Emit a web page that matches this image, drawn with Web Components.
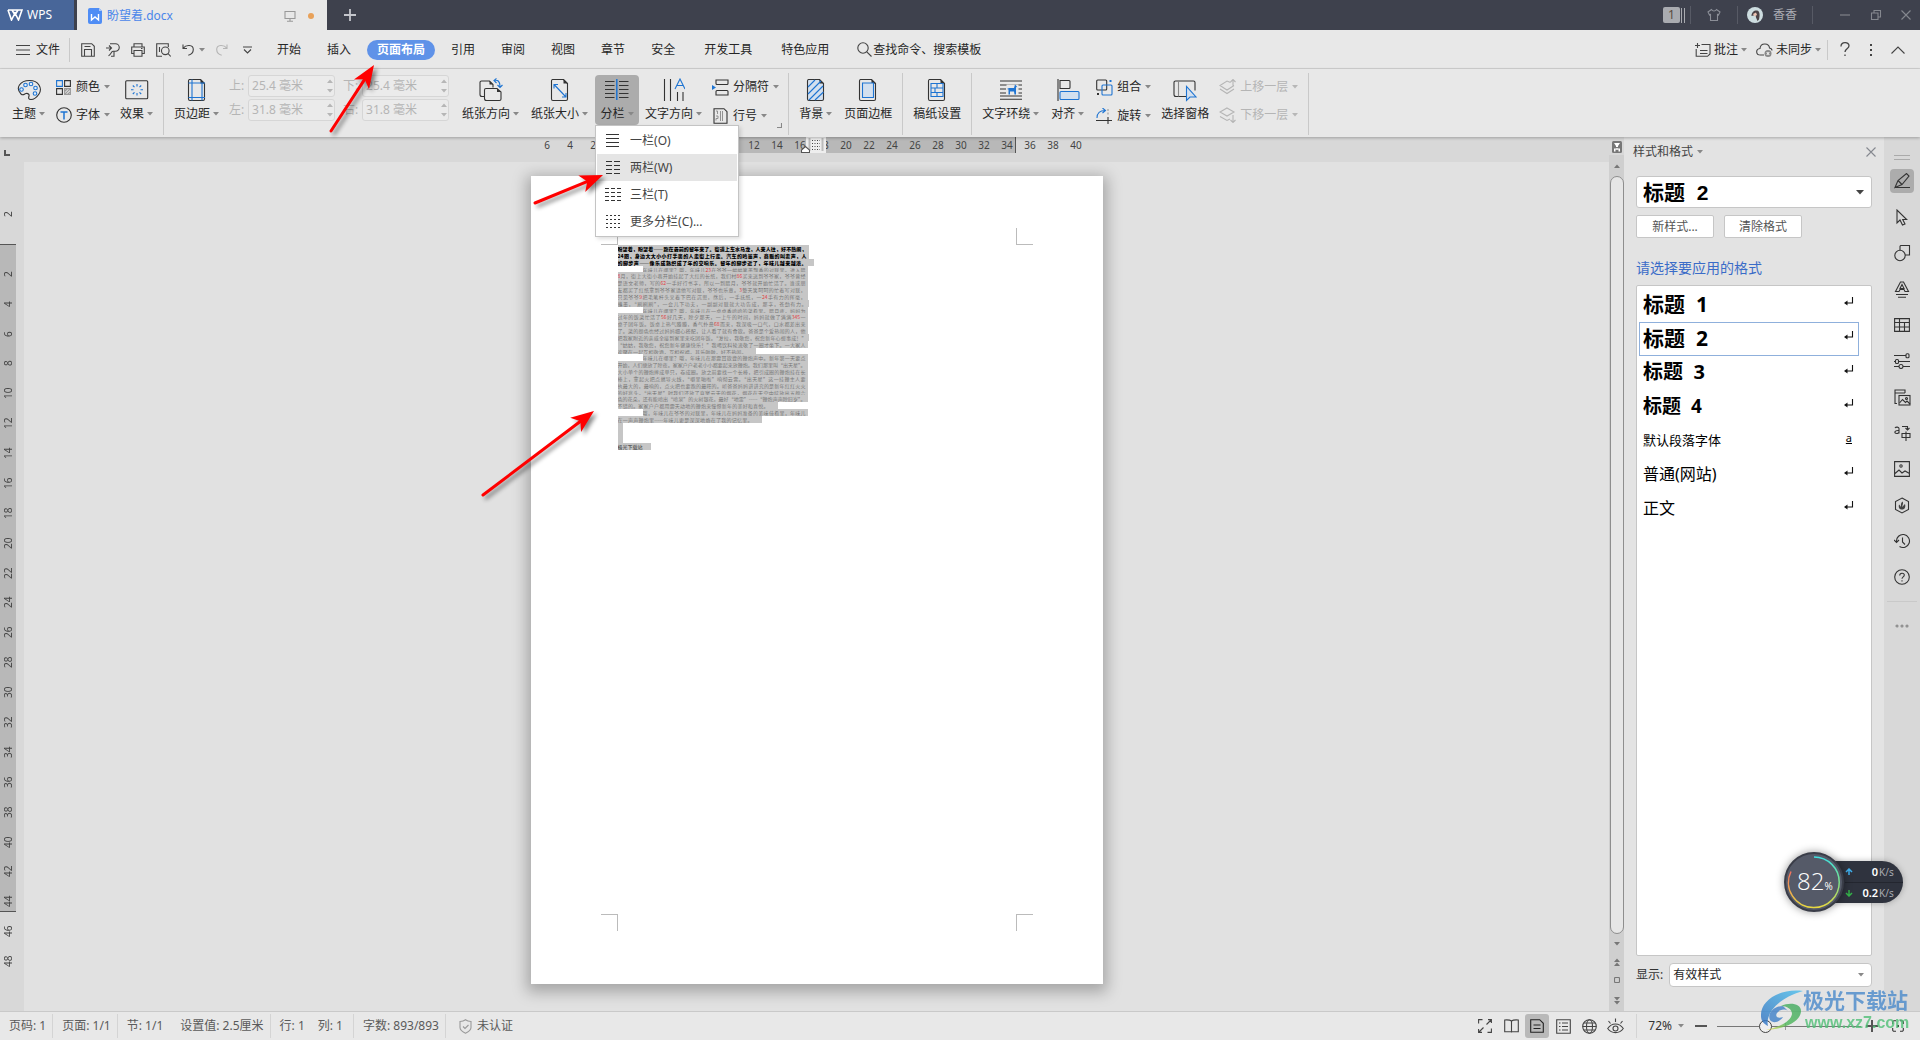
<!DOCTYPE html>
<html lang="zh-CN">
<head>
<meta charset="utf-8">
<title>盼望着.docx - WPS</title>
<style>
html,body{margin:0;height:100%;overflow:hidden}
body{font:12px/16px "Noto Sans","Noto Sans CJK SC",sans-serif;color:#262626;background:#e1e1e1}
</style>
</head>
<body>
<wps-app></wps-app>
<script>
const page='<path d="M3.5 1.500h11l4 4v15.500a1.500 1.500 0 0 1-1.500 1.500h-13a1.500 1.500 0 0 1-1.500-1.500v-18a1.500 1.500 0 0 1 1-1.500z" stroke="#333"/><path d="M14.500 1v4.500h4.500z" fill="#333" stroke="none"/>';
/* name: [width, height, markup] */
const ICONS={
caret:[6,4,'<path d="M0 0h6l-3 3.500z" fill="#888" stroke="none"/>'],
caretDark:[8,5,'<path d="M0 0h8l-4 4.500z" fill="#444" stroke="none"/>'],
wps:[16,12,'<path d="M1 1h14l-3.500 10-3.500-7-3.500 7-3.500-10M5 1l3 5 3-5" stroke="#fff" stroke-width="1.600"/>'],
doc:[14,16,'<path d="M2 0h9l3 3v11a2 2 0 0 1-2 2h-10a2 2 0 0 1-2-2v-12a2 2 0 0 1 2-2z" fill="#4f8df5" stroke="none"/><path d="M11 0v3h3z" fill="#a8c8fb" stroke="none"/><path d="M3.500 6v6l3.500-3 3.500 3v-6" stroke="#fff" stroke-width="1.400"/>'],
monitor:[12,12,'<path d="M1 1.500h10v7h-10zM6 8.500v2.500M3 11.200h6" stroke="#999"/>'],
plus:[12,12,'<path d="M6 0v12M0 6h12" stroke="#c4c6cc" stroke-width="1.800"/>'],
shirt:[14,14,'<path d="M4.500 1.500l-3.500 2.500 1.500 3 1-.5v6h7v-6l1 .5 1.500-3-3.500-2.500c-1 2-4 2-5 0z" stroke="#8b8e97"/>'],
avatar:[16,16,'<circle cx="8" cy="8" r="8" fill="#cddde0" stroke="none"/><path d="M4.500 9c0-4 3-6 5.500-5.500 3 .5 3 5 2 9l-1.500 1.500-1.500-3.500c0-2-1-3-2.500-2z" fill="#4b4246" stroke="none"/><path d="M6 7l3-1.500 1 2.500-2.500 1.500z" fill="#edc4b3" stroke="none"/>'],
min:[10,2,'<path d="M0 1h10" stroke="#85888f"/>'],
restore:[12,12,'<path d="M1.500 4h6.500v6.500h-6.500zM4 4v-2.500h6.500v6.500h-2.500" stroke="#85888f"/>'],
close:[10,10,'<path d="M.5 .5l9 9M9.500 .5l-9 9" stroke="#85888f"/>'],
menu:[14,10,'<path d="M0 .5h14M0 5h14M0 9.500h14" stroke="#444" stroke-width="1"/>'],
save:[14,14,'<path d="M.7 .7h10l2.600 2.600v10h-12.600zM3.500 13v-6.500h7v6.500M3.500 3.500h6" stroke="#444"/>'],
pdf:[14,14,'<path d="M4 .800h5.500a3.500 3.500 0 0 1 0 7.500h-2.500c-2 0-2 3.500-4.500 4.500M0 5h5M3 2.500l2.500 2.500-2.500 2.500M5 13.300h3v-5" stroke="#444"/>'],
print:[14,14,'<path d="M3 4v-3.300h8v3.300M3 10.500h-2.300v-6.500h12.600v6.500h-2.300M3 7.500h8v5.800h-8zM10 5.500h1.500" stroke="#444"/>'],
preview:[15,14,'<path d="M12.300 4v-3.300h-11.600v12.600h5.300M3.500 4v5" stroke="#444"/><circle cx="9.300" cy="7.800" r="3.800" stroke="#444"/><path d="M12 10.500l2.700 3" stroke="#444"/>'],
undo:[13,13,'<path d="M1 1.500v4h4M1.300 5.200c3-4 10-3.500 10 1.300 0 3-2.500 5-5 5.800" stroke="#444"/>'],
redo:[13,13,'<path d="M12 1.500v4h-4M11.700 5.200c-3-4-10-3.500-10 1.300 0 3 2.500 5 5 5.800" stroke="#b5b5b5"/>'],
more:[9,8,'<path d="M0 1h9M1 3.500l3.500 3.500 3.500-3.500" stroke="#444"/>'],
search:[15,15,'<circle cx="6" cy="6" r="5.200" stroke="#444"/><path d="M9.800 9.800l4.700 4.700" stroke="#444"/>'],
note:[16,14,'<path d="M6.500 1.500h8.500v9.500l-2.500 2.300h-11.300v-7.300M0 2.500h5M2.500 0v5M5 7.500h7.500M5 10.500h7.500" stroke="#444"/>'],
cloud:[17,14,'<path d="M8 12h-3.500c-5 0-5-6-.5-6.500.5-6 9-6 9.500-.5 1.500.3 2.500 1.300 2.500 2.500" stroke="#444"/><circle cx="12" cy="10.500" r="3.500" fill="#888" stroke="none"/><path d="M10.700 9.200l2.600 2.600M13.300 9.200l-2.600 2.600" stroke="#eee"/>'],
help:[10,15,'<path d="M1 4.500c0-5 8-5 8-.8 0 3-4 3-4 6.300M5 12.500v1.500" stroke="#444" stroke-width="1.300"/>'],
dots:[4,12,'<path d="M1 0h2v2h-2zM1 5h2v2h-2zM1 10h2v2h-2z" fill="#444" stroke="none"/>'],
up:[14,8,'<path d="M.5 7.500l6.500-6.500 6.500 6.500" stroke="#444"/>'],
theme:[24,22,'<path d="M4 15c-6-6-1-13.500 8.500-13.500s13 8 9.500 13.500c-3 4.500-5 5.500-8 5.500s-2.500-2-2-3.500-1-3-3-2.500-2.500 2.500-5 .5z" stroke="#333"/><g stroke="#1e74d2" fill="#e4effa"><circle cx="4.500" cy="10.500" r="1.800"/><circle cx="8.500" cy="6" r="1.800"/><circle cx="14" cy="5" r="1.800"/><circle cx="18.500" cy="9" r="1.800"/><circle cx="18" cy="14.500" r="1.800"/></g>'],
color:[15,15,'<path d="M.6 .6h5.800v5.800h-5.800z" stroke="#1e74d2"/><path d="M8.600 .6h5.800v5.800h-5.800zM.6 8.600h5.800v5.800h-5.800z" stroke="#333"/><path d="M8.600 8.600h5.800v5.800h-5.800zM8.600 14.400l5.800-5.800M8.600 11.500l3-3M11.500 14.400l3-3" stroke="#999"/>'],
font:[16,16,'<circle cx="8" cy="8" r="7.300" stroke="#333"/><path d="M4.500 5h7M8 5v7.500" stroke="#1e74d2" stroke-width="1.500"/>'],
effect:[24,20,'<rect x=".7" y=".7" width="22" height="18" rx="1" stroke="#333"/><path d="M12 4v2.500M12 13v2.500M6 9.800h2.500M15.500 9.800h2.500M7.800 5.500l1.700 1.700M14.500 12.300l1.700 1.700M16.200 5.500l-1.700 1.700M9.500 12.300l-1.700 1.700" stroke="#1e74d2"/>'],
margin:[22,24,page+'<path d="M6 1.500v21M16 5v17.500M2.500 5h16.500M2.500 19.500h16.500" stroke="#1e74d2"/>'],
orient:[24,24,'<path d="M6 18.500h-3a2 2 0 0 1-2-2v-12a1.500 1.500 0 0 1 1.500-1.500h8l3.500 3.500v3" stroke="#333"/><path d="M10.500 3v3.500h3.500z" fill="#333" stroke="none"/><path d="M7 10.500h11l4 3.500v7a1.500 1.500 0 0 1-1.500 1.500h-13a2 2 0 0 1-2-2v-8.500a1.500 1.500 0 0 1 1.500-1.500z" stroke="#333" fill="#e8e8e8"/><path d="M18 10.500v3.500h4z" fill="#333" stroke="none"/><path d="M15 2.500c4-1 6 1 6 6M17.500 .5l-2.500 2 2.500 2.500M18.500 7l2.500 2.500 2.500-2.500" stroke="#1e74d2"/>'],
size:[22,24,page+'<path d="M5.500 7l11 11.500M5 10.500v-4h4M17 15v4h-4" stroke="#1e74d2"/>'],
columns:[24,24,'<path d="M0 3.500h9.500M0 7.500h9.500M0 11.500h9.500M0 15.500h9.500M0 19.500h9.500M14 3.500h9.500M14 7.500h9.500M14 11.500h9.500M14 15.500h9.500M14 19.500h9.500" stroke="#333"/><path d="M11.800 1v21" stroke="#1e74d2" stroke-width="1.500"/>'],
textdir:[22,24,'<path d="M1.500 1v22M7.500 1v22M14.500 14v9M20 14v9" stroke="#333"/><path d="M12 11l5-10 5 10M13.800 7.500h6.500" stroke="#1e74d2"/>'],
breaks:[17,17,'<path d="M4 1v3.500a1 1 0 0 0 1 1h10a1 1 0 0 0 1-1v-3.500zM4 16v-3.500a1 1 0 0 1 1-1h10a1 1 0 0 1 1 1v3.500z" stroke="#333"/><path d="M0 6l4 2.500-4 2.500z" fill="#1e74d2" stroke="none"/>'],
lineno:[15,16,'<path d="M1 .7h10l3 3v11.600h-13z" stroke="#333"/><path d="M3 3h1.500v3M3 8h2v2.500h-2v2M7.500 3v10M9.500 3v10" stroke="#888" stroke-width=".9"/>'],
bg:[22,24,'<path d="M3 2h12l4 4v16h-16z" fill="#d3e0ef" stroke="none"/>'+page+'<path d="M3 9l7-7M3 16l13-13M4 22l14-14M10 22l8.500-8" stroke="#1e74d2"/>'],
border:[22,24,page+'<path d="M5.500 5h11v14.500h-11z" stroke="#1e74d2" fill="#d3e0ef"/>'],
grid:[22,24,page+'<path d="M5 5.500h12v13h-12zM5 10h12M5 14.500h12M11 5.500v4.500M11 14.500v4M9 10v4.500" stroke="#1e74d2"/>'],
wrap:[22,20,'<path d="M0 1h22M0 5h22M0 9h6M18 9h4M0 13h6M18 13h4M0 16h22M0 19.300h22" stroke="#333"/><path d="M6.500 4.500h12v10h-12z" fill="#e8e8e8" stroke="none"/><path d="M7 9l1.500.5v5h1.500v-3h4l.5 3h1.500v-7l1-1-2-2-1 3.500h-5z" fill="#1e74d2" stroke="none"/>'],
align:[24,24,'<path d="M2 1v22M4 2.500h9a1 1 0 0 1 1 1v6a1 1 0 0 1-1 1h-9z" stroke="#333"/><rect x="4" y="13.500" width="19" height="8" rx="1" stroke="#1e74d2" fill="#d3e0ef"/>'],
group:[17,17,'<rect x=".7" y="1" width="10" height="10" rx="1" stroke="#333"/><rect x="6" y="6" width="10" height="10" rx="1" stroke="#1e74d2"/><path d="M13.500 1h2v2h-2z" fill="#1e74d2" stroke="none"/><path d="M1 14h2v2h-2z" fill="#333" stroke="none"/>'],
rotate:[17,16,'<path d="M1 10c0-5 3-7.500 8-7.500M6.500 0l3 2.500-3 2.500" stroke="#1e74d2"/><path d="M0 12.500h16M12 9v7" stroke="#333"/><path d="M12 1v7" stroke="#999" stroke-dasharray="2 1.500"/>'],
select:[24,24,'<path d="M13 18.500h-10a2 2 0 0 1-2-2v-12a1.500 1.500 0 0 1 1.500-1.500h18a1.500 1.500 0 0 1 1.500 1.500v8" stroke="#333"/><path d="M5.500 3v15.500" stroke="#888"/><path d="M13.500 8.500v14l3.500-3.500h6z" stroke="#1e74d2" fill="#d3e0ef"/>'],
layerUp:[17,16,'<path d="M11.500 3.500l-3.500-1.500-7 4.500 7 4.500 7-4.500M1 10l7 4.500 7-4.500M14 6.500v-5.500M11.500 3l2.500-2.500 2.500 2.500" stroke="#b5b5b5"/>'],
layerDown:[17,16,'<path d="M8 1l7 4-7 4-7-4zM1 9.500l7 4 3-1.500M14 8v7M11.500 13l2.500 2.500 2.500-2.500" stroke="#b5b5b5"/>'],
launcher:[5,5,'<path d="M4.500 0v4.500h-4.500" stroke="#888"/>'],
col1:[16,14,'<path d="M1 .5h13M1 4.500h13M1 8.500h13M1 12.500h13" stroke="#333"/>'],
col2:[16,14,'<path d="M1 .5h6M9 .5h6M1 4.500h6M9 4.500h6M1 8.500h6M9 8.500h6M1 12.500h6M9 12.500h6" stroke="#333"/>'],
col3:[16,14,'<path d="M0 .5h16M0 4.500h16M0 8.500h16M0 12.500h16" stroke="#333" stroke-dasharray="4 2"/>'],
col4:[16,14,'<path d="M1 .5h14M1 4.500h14M1 8.500h14M1 12.500h14" stroke="#333" stroke-dasharray="2 2"/>'],
colmark:[20,14,'<path d="M3.500 1v13M16.500 1v13" stroke="#bbb" stroke-width="2"/><path d="M6 3.500h8M6 6.500h8M6 9.500h8M6 12.500h8" stroke="#444" stroke-dasharray="1 1.500"/>'],
indent:[9,7,'<path d="M.5 6.500v-2.500l4-3.500 4 3.500v2.500z" fill="#fff" stroke="#555"/>'],
tabstop:[6,6,'<path d="M1 0v5h5" stroke="#555" stroke-width="2"/>'],
diskette:[10,12,'<rect width="10" height="12" rx="1.500" fill="#777" stroke="none"/><path d="M2 2h6l-2 3v1h-2v-1zM2 8h1.500v2.500h-1.500zM4.500 7h1v2h-1zM6.500 8h1.500v2.500h-1.500zM2 7.500h6v1h-6z" fill="#fff" stroke="none"/>'],
triUp:[6,4,'<path d="M0 4h6l-3-3.500z" fill="#777" stroke="none"/>'],
triDown:[6,4,'<path d="M0 0h6l-3 3.500z" fill="#777" stroke="none"/>'],
dblUp:[6,8,'<path d="M0 4h6l-3-3.500zM0 8h6l-3-3.500z" fill="#777" stroke="none"/>'],
dblDown:[6,8,'<path d="M0 0h6l-3 3.500zM0 4h6l-3 3.500z" fill="#777" stroke="none"/>'],
ring:[6,6,'<rect x=".5" y=".5" width="5" height="5" rx="1" stroke="#777"/>'],
enter:[10,9,'<path d="M8.500 0v6h-6.500" stroke="#111"/><path d="M0 6l3.500-2.500v5z" fill="#111" stroke="none"/>'],
grip:[16,5,'<path d="M0 .5h16M0 4.500h16" stroke="#aaa"/>'],
pen:[18,16,'<path d="M2 14.500l3-7 8.500-7 2.500 2.500-7 8.500zM5 7.500l4 4M2 14.500h15" stroke="#333"/>'],
cursor:[12,17,'<path d="M1 1v13l3-3 2.500 5 2.500-1-2.300-4.500h4z" stroke="#333"/>'],
shapes:[17,17,'<path d="M6 5v-3.500a1 1 0 0 1 1-1h8.500v9.500h-4.500" stroke="#333"/><circle cx="6" cy="10.500" r="5.200" stroke="#333"/>'],
art:[16,17,'<path d="M1.500 10.500l5-9.500h3l5 9.500h-3.500l-1-2h-4l-1 2zM6 7.500l2-4 2 4zM2 13.500h12M4 16.200h8" stroke="#333"/>'],
table:[16,14,'<path d="M.6 .6h14.800v12.800h-14.800zM.6 4.500h14.800M.6 9h14.800M5.500 .6v12.800M10.500 4.500v9" stroke="#333"/>'],
sliders:[16,16,'<path d="M0 2.500h12M5 8.500h11M0 8.500h1M0 13.500h5M9 13.500h7" stroke="#333"/><rect x="12" y=".7" width="3" height="4" rx="1" stroke="#333"/><rect x="1.500" y="6.500" width="3" height="4" rx="1" stroke="#333"/><circle cx="7" cy="13.500" r="2" stroke="#333"/>'],
gallery:[17,17,'<path d="M1 4v-3h10v3M1 4h10M1 4v10.500h2" stroke="#333"/><rect x="5" y="6.500" width="11" height="9.500" stroke="#333"/><path d="M5.500 14l3-3.500 3 3 1.500-1.500 3 3" stroke="#333"/><circle cx="12.500" cy="9.500" r="1" stroke="#333"/>'],
translate:[17,16,'<path d="M1 3c1-1.500 4-1 4 .5v5M5 5.500c-5-.5-5 3-2.500 3 1.500 0 2.500-.5 2.500-1.500M8 1.500h5.500v3M11.500 3l2 2 2-2M8 8.500h8v4h-8zM12 6.500v9.500" stroke="#333"/>'],
image:[16,16,'<path d="M.6 .6h14.800v14.800h-14.800zM1 12.500l4-3.500 3 3 3-2 4.500 2.500" stroke="#333"/><circle cx="7" cy="5" r="1.200" stroke="#333"/>'],
hex:[16,17,'<path d="M8 1l6.500 3.500v8l-6.500 3.500-6.500-3.500v-8z" stroke="#333"/><path d="M8.500 4.500c1.500 2-.5 3.500 0 5.500.8-1 1.200-2 2.500-3 1 3.500-.5 5.500-2.800 5.500-2.200 0-4.200-1.200-3.200-5 1 .7 1.500 1.500 2 2.700.2-2-.8-3.700 1.500-5.700z" fill="#444" stroke="none"/>'],
clock:[17,16,'<path d="M2.500 8.500a6.500 6.500 0 1 1 3 5M0 7l2.500 2.500 2.500-2.500M8.500 4.500v4.500l2.500 2.500" stroke="#333"/>'],
helpc:[16,16,'<circle cx="8" cy="8" r="7.300" stroke="#333"/><path d="M5.700 6.500c0-3 4.600-3 4.600-.5 0 2-2.300 1.700-2.300 3.800M8 11.300v1.200" stroke="#333"/>'],
ell:[14,4,'<g stroke="#888"><circle cx="2" cy="2" r="1"/><circle cx="7" cy="2" r="1"/><circle cx="12" cy="2" r="1"/></g>'],
shield:[13,15,'<path d="M1 2.500c2 0 4-.5 5.500-1.700 1.500 1.200 3.500 1.700 5.500 1.700v6c0 3-3 4.500-5.500 5.700-2.500-1.200-5.500-2.700-5.500-5.700zM4 7.500l2 2 3.500-3.500" stroke="#999"/>'],
full:[14,14,'<path d="M4 13.400h-3.400v-3.400M13.400 4v-3.400h-3.400M.6 4.500v-3.900h3.900M13.400 9.500v3.900h-3.900M8.500 5.500l4.500-4.500M5.500 8.500l-4.500 4.500" stroke="#444"/>'],
book:[15,14,'<path d="M7.500 2v11.500M7.500 2c-1.500-1.200-4-1.200-6.800-1v11.800h6.800M7.500 2c1.500-1.200 4-1.200 6.800-1v11.800h-6.800" stroke="#444"/>'],
pageview:[14,14,'<path d="M.7 .7h9l3.600 3.600v9h-12.600zM3.500 6h7M3.500 9.500h7" stroke="#222"/>'],
outline:[15,15,'<path d="M.7 .7h13.600v13.600h-13.600zM6 4h6M6 7.500h6M6 11h6M3 4h1.500M3 7.500h1.500M3 11h1.500" stroke="#444"/>'],
globe:[15,15,'<circle cx="7.500" cy="7.500" r="6.800" stroke="#444"/><ellipse cx="7.500" cy="7.500" rx="3" ry="6.800" stroke="#444"/><path d="M.7 7.500h13.600M1.500 4h12M1.500 11h12" stroke="#444"/>'],
eye:[17,16,'<path d="M.7 10.500c4-6 11.500-6 15.600 0-4 5.500-11.500 5.500-15.600 0zM8.500 4v-3.500M3.500 5.500l-2-2.500M13.500 5.500l2-2.500" stroke="#444"/><circle cx="8.500" cy="10.500" r="2.500" stroke="#444"/>'],
minus:[12,2,'<path d="M0 1h12" stroke="#555" stroke-width="2"/>'],
plusd:[12,12,'<path d="M6 0v12M0 6h12" stroke="#555" stroke-width="2"/>'],
fit:[12,12,'<path d="M4 .7h-2a1.300 1.300 0 0 0-1.300 1.300v2M.7 8v2a1.300 1.300 0 0 0 1.300 1.300h2M8 .7h2a1.300 1.300 0 0 1 1.300 1.300v2M11.300 8v2a1.300 1.300 0 0 1-1.300 1.300h-2" stroke="#333"/><path d="M5 5h2v2h-2z" fill="#333" stroke="none"/>'],
};
const COMMON=`:host{display:block;box-sizing:border-box}*{box-sizing:border-box}
button,input,select{font:inherit;color:inherit;background:none;border:0;padding:0;margin:0}
button{display:inline-flex;align-items:center;white-space:nowrap}a{color:inherit;text-decoration:none}ul{list-style:none;margin:0;padding:0}
.row{display:flex;align-items:center}.sep{width:1px;background:#c9c9c9;flex:none}`;
class El extends HTMLElement{
 connectedCallback(){if(this.shadowRoot)return;const r=this.attachShadow({mode:'open'});r.innerHTML='<style>'+COMMON+(this.constructor.css||'')+'</style>'+this.html();}
 a(n){return this.getAttribute(n)||''}
}
const def=(name,css,html)=>customElements.define(name,class extends El{static css=css;html(){return html(this)}});
const i=n=>`<wps-icon name="${n}"></wps-icon>`;

def('wps-icon',':host{display:inline-flex;flex:none}svg{display:block}',e=>{const[w,h,m]=ICONS[e.a('name')];return`<svg width="${w}" height="${h}" viewBox="0 0 ${w} ${h}" fill="none" stroke-width="1.1" aria-hidden="true">${m}</svg>`});

def('title-bar',`:host{display:flex;height:30px;background:#3e414d;color:#a9abb2;align-items:stretch}
.wps{width:74px;background:#486699;color:#fff;padding-left:7px;gap:4px;margin-right:3px}
.tab{width:250px;background:#e8e8e8;color:#4a86ea;padding:2px 13px 0 11px}.tab span{margin-left:5px;flex:1}.dot{width:6px;height:6px;border-radius:3px;background:#e8a159;margin-left:12px}
.add{padding:0 17px}.fill{flex:1}.right{gap:0}.badge{width:17px;height:16px;background:#a9abb0;color:#5b4b40;border-radius:2px;text-align:center;line-height:16px}
.bars{width:4px;height:15px;border-left:1px solid #a9abb0;border-right:1px solid #a9abb0;margin:0 5px 0 1px}
.sep{height:18px;background:#575a65}.right button{height:30px}`,
()=>`<button class="wps">${i('wps')}WPS</button><div class="tab row">${i('doc')}<span>盼望着.docx</span>${i('monitor')}<i class="dot"></i></div><button class="add" aria-label="新建">${i('plus')}</button><div class="fill"></div>
<div class="right row"><div class="badge">1</div><div class="bars"></div><i class="sep"></i><button style="padding:0 16px" aria-label="皮肤">${i('shirt')}</button><i class="sep"></i><button style="padding:0 15px 0 9px;gap:10px">${i('avatar')}香香</button><i class="sep"></i><button style="padding:0 10px 0 27px" aria-label="最小化">${i('min')}</button><button style="padding:0 9px 0 10px" aria-label="还原">${i('restore')}</button><button style="padding:0 9px 0 10px" aria-label="关闭">${i('close')}</button></div>`);

def('menu-bar',`:host{display:flex;height:39px;background:#e8e8e8;border-bottom:1px solid #d2d2d2;align-items:center;padding:1px 0 0 16px}
.file{gap:6px;margin-right:9px}.sep{height:24px}.quick{gap:11px;padding-left:11px;width:194px}.quick button:nth-child(6){margin-left:-1px}
nav a{padding:0 13px;line-height:20px}nav a.on{background:#5f92e8;color:#fff;font-weight:700;border-radius:10px;margin:0 3px;padding:0 10px}nav a.wide{padding:0 13px 0 16px}nav a.last{padding-left:16px;padding-right:28px}
.search{gap:1px}.fill{flex:1}`,
()=>`<button class="file">${i('menu')}文件</button><i class="sep"></i><div class="quick row"><button aria-label="保存">${i('save')}</button><button aria-label="输出PDF">${i('pdf')}</button><button aria-label="打印">${i('print')}</button><button aria-label="预览">${i('preview')}</button><button aria-label="撤销" style="gap:4px">${i('undo')}${i('caret')}</button><button aria-label="恢复">${i('redo')}</button><button aria-label="更多" style="margin-left:4px">${i('more')}</button></div>
<nav class="row"><a href="#">开始</a><a href="#">插入</a><a href="#" class="on">页面布局</a><a href="#">引用</a><a href="#">审阅</a><a href="#">视图</a><a href="#">章节</a><a href="#">安全</a><a href="#" class="wide">开发工具</a><a href="#" class="last">特色应用</a></nav><button class="search">${i('search')}查找命令、搜索模板</button><div class="fill"></div>
<button style="gap:3px;margin-right:9px">${i('note')}批注${i('caret')}</button><button style="gap:3px;margin-right:6px">${i('cloud')}未同步${i('caret')}</button><i class="sep" style="height:20px"></i><button style="padding:0 19px 0 12px" aria-label="帮助">${i('help')}</button><button aria-label="选项">${i('dots')}</button><button style="padding:0 15px 0 18px" aria-label="折叠">${i('up')}</button>`);

def('big-tool',`:host{display:block;margin-top:6px}button{flex-direction:column;height:50px;padding:3px 0;border-radius:4px;gap:4px}.ic{height:24px;display:flex;align-items:center}.lb{display:flex;align-items:center;gap:3px;line-height:16px}
:host([active]) button{background:#acacac;padding:3px 5px;width:44px}`,
e=>`<button><span class="ic">${i(e.a('icon'))}</span><span class="lb"><slot></slot>${e.hasAttribute('plain')?'':i('caret')}</span></button>`);
def('small-tool',`button{height:22px;gap:4px}.ic{width:17px;display:flex;justify-content:center}:host([off]) button{color:#b5b5b5}:host([off]) wps-icon[name=caret]{opacity:.5}`,
e=>`<button${e.hasAttribute('off')?' disabled':''}><span class="ic">${i(e.a('icon'))}</span><slot></slot>${i('caret')}</button>`);
def('num-field',`:host{display:flex;align-items:center;color:#b5b5b5}label{width:19px;white-space:nowrap}.box{display:flex;align-items:center;width:87px;height:22px;border:1px solid #d6d6d6;border-radius:3px;background:#ebebeb;padding:0 1px 0 3px}input{width:70px;flex:1;min-width:0;color:#b5b5b5}.sp{display:flex;flex-direction:column;gap:6px;opacity:.45}`,
e=>`<label for="f">${e.a('label')}:</label><span class="box"><input id="f" value="${e.a('value')}" disabled><span class="sp">${i('triUp')}${i('triDown')}</span></span>`);
def('column-menu',`:host{position:absolute;left:0;top:50px;width:144px;border:1px solid #c4c4c4;background:#fff;padding:1px;box-shadow:2px 2px 4px #0002;z-index:5}
button{display:flex;width:100%;height:27px;padding-left:8px;gap:9px;color:#444}button.on{background:#e5e5e5}`,
()=>[['col1','一栏(O)'],['col2','两栏(W)'],['col3','三栏(T)'],['col4','更多分栏(C)...']].map(([n,t],k)=>`<button${k==1?' class="on"':''} role="menuitem">${i(n)}${t}</button>`).join(''));

def('ribbon-bar',`:host{display:flex;height:68px;background:#e8e8e8;padding-left:12px;gap:10px;align-items:flex-start;position:relative;z-index:3;box-shadow:0 1px 3px #0004}
.col{display:flex;flex-direction:column;gap:5px;padding-top:7px}.fields{display:grid;grid-template-columns:106px 106px;gap:2px 8px;padding-top:6px;margin-right:3px}
.sep{height:62px;margin-top:4px}.m{margin-right:2px}.w{position:relative}.w column-menu{margin-top:6px}.launch{align-self:flex-end;margin:0 -4px 5px -12px}`,
()=>`<big-tool icon="theme">主题</big-tool><div class="col"><small-tool icon="color">颜色</small-tool><small-tool icon="font">字体</small-tool></div><big-tool icon="effect">效果</big-tool><i class="sep"></i>
<big-tool icon="margin">页边距</big-tool><div class="fields"><num-field label="上" value="25.4 毫米"></num-field><num-field label="下" value="25.4 毫米"></num-field><num-field label="左" value="31.8 毫米"></num-field><num-field label="右" value="31.8 毫米"></num-field></div>
<big-tool class="m" icon="orient">纸张方向</big-tool><big-tool icon="size" style="margin-right:-3px">纸张大小</big-tool><div class="w"><big-tool icon="columns" active>分栏</big-tool><column-menu></column-menu></div><big-tool icon="textdir" style="margin-left:-4px">文字方向</big-tool><div class="col"><small-tool icon="breaks">分隔符</small-tool><small-tool icon="lineno">行号</small-tool></div><span class="launch">${i('launcher')}</span><i class="sep"></i>
<big-tool class="m" icon="bg">背景</big-tool><big-tool icon="border" plain>页面边框</big-tool><i class="sep"></i><big-tool icon="grid" plain>稿纸设置</big-tool><i class="sep"></i>
<big-tool class="m" icon="wrap">文字环绕</big-tool><big-tool class="m" icon="align">对齐</big-tool><div class="col"><small-tool icon="group">组合</small-tool><small-tool icon="rotate">旋转</small-tool></div><big-tool icon="select" plain>选择窗格</big-tool><div class="col"><small-tool icon="layerUp" off>上移一层</small-tool><small-tool icon="layerDown" off>下移一层</small-tool></div><i class="sep"></i>`);

def('v-ruler',`:host{width:24px;background:#d8d8d8;padding-top:5px;position:relative;flex:none;overflow:hidden;font-size:10px;color:#444}
.band{position:absolute;left:0;top:107px;width:16px;height:668px;background:#b8b8b8;border-top:1px solid #555;border-bottom:1px solid #555}
.nums{position:absolute;left:0;top:62px;width:16px;height:777px;display:grid;grid-auto-rows:1fr}.nums span{writing-mode:vertical-rl;transform:rotate(180deg);display:flex;align-items:center;justify-content:center;line-height:16px}
wps-icon{margin:8px 0 0 4px}`,
()=>`${i('tabstop')}<div class="band"></div><div class="nums">${['2','',...Array.from({length:24},(_,k)=>k*2+2)].map(n=>`<span>${n}</span>`).join('')}</div>`);
def('h-ruler',`:host{height:25px;background:#d8d8d8;display:flex;justify-content:center;font-size:10px;color:#444}
.r{width:572px;height:16px;position:relative;padding-left:5px;display:flex;background:linear-gradient(90deg,#0000 86px,#b8b8b8 86px,#b8b8b8 484px,#555 484px,#555 485px,#0000 485px)}
.r span{width:23px;text-align:center;line-height:16px;flex:none}.mk{position:absolute;left:275px;top:0;width:20px;height:16px;background:#eee}.in{position:absolute;left:270px;top:9px;display:flex}`,
()=>`<div class="r">${[6,4,2,'','','','','','',...Array.from({length:15},(_,k)=>k*2+12)].map(n=>`<span>${n}</span>`).join('')}<div class="mk">${i('colmark')}</div><div class="in">${i('indent')}</div></div>`);

const LINES=[
['b','盼望着，盼望着——跑在最前的留年来了。街道上车水马龙，人来人往，好不热闹，',191],
['b','24圈，身边大大小小打手裹的人走街上行走。汽车的鸣笛声，商贩的叫卖声，人',191],
['b','的脚步声——像乐成熟织成了年的交响乐。留年的脚步近了，年味儿越来越浓。',196],
['i','年味儿在哪里？哦，年味儿<r>23</r>在爷爷一幅幅笔墨飘香的对联里。进入腊',190],
['','<r>8</r>月，街上大街小巷开始挂起了大红的长纸，我们村<r>86</r>买来送到爷爷家，爷爷曾经',190],
['','是语文老师，写的<r>62</r>一手好行书字，所以一到腊月，爷爷就开始忙活了。谁或朋',190],
['','友都买了红纸拿到爷爷家请他写对联，爷爷也乐意。<r>3</r>整天笑呵呵的忙着写对联，',190],
['','只见爷爷<r>9</r>把毛笔杆头叉着下巴在沉思，然后，一手抚纸，一<r>24</r>手有力的挥毫，',190],
['','蘸墨，“刷刷刷”，一会儿下功夫，一副副对联就大功告成，那字，苍劲有力。',191],
['i','年味儿在哪里？哦，年味儿在一桌桌香喷喷的菜肴里。腊月底，妈妈为',190],
['','过年的饭菜忙活了<r>56</r>好几天，除夕那天，一上午的时间，妈妈就做了满满<r>345</r>一',190],
['','桌子团年饭。饭桌上热气腾腾，香气扑鼻<r>68</r>而来，我深吸一口气，口水都差出来',190],
['','了。菜的颜色也经过妈妈细心搭配，让人看了就有食欲。爸爸是个爱热闹的人，他',190],
['','把我家附近的亲戚全接到家里来吃团年饭。“发拉，我敬您，祝您新年心想事成！”',191],
['','“姑姑，我敬您，祝您新年健康快乐！”我喝饮料轮流敬了一圈才坐下。一大家人',190],
['','欢聚在一起互相敬酒，互相祝福，其乐融融，好不热闹。',138],
['i','年味儿在哪里？哦，年味儿在那震耳欲聋的鞭炮声中。新年第一天要点',190],
['','开始，人们便放了除夜。家家户户老老小小都要起来放鞭炮。我们那里叫“出天星”。',190],
['','大小单个的鞭炮摔成单只，卷成圈。放之前要找一个长棒，把引成圈的鞭炮挂在长',190],
['','棒上，拿起火把点燃导火线，“噼里啪啦”响彻云霄。“出天星”这一挂鞭主人要',190],
['','执最大的，最响的，点火把也要跑的最旺的。听爸爸妈妈讲讲究的是新年红红火火',190],
['','的好兆头。“出天星”时我们还放了直窜云天的烟花，烟花在天空中绽放出五颜六',190],
['','色的花朵，还有能喷出“喷泉”的火树银花，最好“地雷”-----“鞭炮声声除旧岁”。',190],
['','不错的。家家户户都用震天动地的鞭炮来憧憬新年的美好和喜悦。',160],
['i','哦，年味儿在爷爷的对联里，年味儿在妈妈准备的美味佳肴里，年味儿',190],
['','在一声声鞭炮里-----年味儿更是深深地烙在了我的记忆里。',144],
['','',5],['','',5],['','',5],['d','极光下载站',33]];
def('doc-page',`:host{width:572px;aspect-ratio:17/24;background:#fff;box-shadow:0 4px 14px 4px #0004;padding:69px 87px 70px 86px;flex:none}
.area{position:relative;height:100%}.c{position:absolute;width:17px;height:17px;border:0 solid #bbb}
.tl{left:-16px;top:-17px;border-width:0 1px 1px 0}.tr{right:-17px;top:-17px;border-width:0 0 1px 1px}.bl{left:-16px;bottom:-17px;border-width:1px 1px 0 0}.br{right:-17px;bottom:-17px;border-width:1px 0 0 1px}
.t{display:grid;grid-auto-rows:1fr;height:205px;margin-left:1px;font:5px/7px "Noto Sans CJK SC",sans-serif;color:#777;align-items:stretch}
p{margin:0;background:#c6c6c6;white-space:nowrap;padding-right:2px;overflow:hidden}p.b{font-weight:900;color:#000}p.i{margin-left:25px}r{color:#e04040}p.j{text-align-last:justify;white-space:normal}p.d{color:#333}`,
()=>`<div class="area"><i class="c tl"></i><i class="c tr"></i><i class="c bl"></i><i class="c br"></i><div class="t">${LINES.map(([c,t,w])=>`<p class="${c}${w>135&&t?' j':''}" style="width:${c=='i'?w-25:w}px${w==196?';padding-right:7px':w==138||w==160||w==144?';padding-right:9px':''}">${t}</p>`).join('')}</div></div>`);

def('v-scroll',`:host{width:15px;flex:none;display:flex;flex-direction:column;align-items:center;background:#cfcfcf}
.top{height:18px;width:100%;background:#d8d8d8;display:flex;justify-content:center;padding-top:4px}button{justify-content:center}
.thumb{flex:1;width:14px;border:1px solid #8e8e8e;border-radius:7px;background:#e6e6e6}`,
()=>`<div class="top">${i('diskette')}</div><button style="height:21px" aria-label="向上">${i('triUp')}</button><div class="thumb"></div><button style="height:20px" aria-label="向下">${i('triDown')}</button><button style="height:16px" aria-label="上一页">${i('dblUp')}</button><button style="height:20px" aria-label="浏览">${i('ring')}</button><button style="height:21px" aria-label="下一页">${i('dblDown')}</button>`);

def('style-panel',`:host{width:260px;flex:none;background:#e3e3e3;display:flex;flex-direction:column;padding:0 12px 24px}
.hd{height:30px;margin:0 -4px 9px -3px;gap:4px;color:#444}.hd b{font-weight:400}.hd i{flex:1}
.sel{position:relative;display:flex;align-items:center}.sel wps-icon{position:absolute;right:8px;pointer-events:none}
select{appearance:none;width:100%;background:#fff;border:1px solid #c6c6c6;border-radius:3px}
#cur{height:32px;font:700 21px "Liberation Sans","Noto Sans CJK SC",sans-serif;padding-left:6px;color:#000}
.bt{display:flex;gap:10px;margin:7px 0 18px}.bt button{width:78px;height:23px;justify-content:center;background:#fff;border:1px solid #c6c6c6;border-radius:2px;color:#555}
h3{margin:0 0 7px;font:400 14px/22px "Noto Sans CJK SC",sans-serif;color:#3a6cc8}
ul{flex:1;background:#fff;border:1px solid #c6c6c6;border-radius:2px;padding:2px 12px 0 2px}li button{display:flex;justify-content:space-between;width:100%;height:34px;padding:0 4px 2px 3px;color:#000;white-space:pre;border:1px solid transparent}
li button.on{border-color:#8fb0dc}li wps-icon{margin-bottom:5px}u{font-size:11px;margin:0 2px 5px 0}
.ft{margin-top:7px;gap:6px}.ft .sel{flex:1}#show{height:24px;border-radius:4px;padding-left:3px}.ft label{color:#333;white-space:nowrap}`,
()=>`<div class="hd row"><b>样式和格式</b>${i('caret')}<i></i><button aria-label="关闭">${i('close')}</button></div>
<div class="sel"><select id="cur" aria-label="当前样式"><option>标题&nbsp; 2</option></select>${i('caretDark')}</div><div class="bt"><button>新样式...</button><button>清除格式</button></div><h3>请选择要应用的格式</h3>
<ul>${[['标题  1','700 21px'],['标题  2','700 21px'],['标题  3','700 20px'],['标题  4','700 19px'],['默认段落字体','400 13px'],['普通(网站)','400 16px'],['正文','400 16px']].map(([t,f],k)=>`<li><button class="${k==1?'on':''}" style="font-weight:${f.split(' ')[0]};font-size:${f.split(' ')[1]}">${t}${k==4?'<u>a</u>':i('enter')}</button></li>`).join('')}</ul>
<div class="ft row"><label for="show">显示:</label><div class="sel"><select id="show"><option>有效样式</option></select>${i('caret')}</div></div>`);

def('side-bar',`:host{width:36px;flex:none;background:#d8d8d8;display:flex;flex-direction:column;align-items:center;padding-top:11px}
button{width:24px;height:24px;justify-content:center;border-radius:4px;margin-bottom:12px}.g{height:21px}.on{background:#acacac}.sep{width:30px;height:1px;margin-bottom:12px}`,
()=>`<div class="g">${i('grip')}</div>${[['pen','样式'],['cursor','选择'],['shapes','形状'],['art','艺术字'],['table','表格'],['sliders','属性'],['gallery','图库'],['translate','翻译'],['image','图片'],['hex','推荐'],['clock','历史'],['helpc','帮助']].map(([n,l],k)=>`<button class="${k?'':'on'}" aria-label="${l}">${i(n)}</button>`).join('')}<i class="sep"></i><button aria-label="更多">${i('ell')}</button>`);

def('status-bar',`:host{display:flex;align-items:center;height:29px;background:#e8e8e8;border-top:1px solid #c9c9c9;color:#5a5a5a;padding-left:9px;white-space:nowrap}
.sep{height:24px;background:#d4d4d4}.c{padding:0 6px 0 9px;display:flex;gap:17px}.fill{flex:1}.v button{width:24px;height:24px;justify-content:center;margin-right:2px;border-radius:3px}.v .on{background:#b9b9b9}
input{appearance:none;width:144px;height:14px;margin:0 5px 0 10px;background:linear-gradient(#777,#777) 0 50%/100% 1px no-repeat,linear-gradient(#999,#999) 68px 50%/1px 7px no-repeat}
input::-webkit-slider-thumb{appearance:none;width:13px;height:13px;border-radius:50%;border:1px solid #444;background:#f0f0f0}`,
()=>`<span class="c" style="padding-left:0">页码: 1</span><i class="sep"></i><span class="c">页面: 1/1</span><i class="sep"></i><span class="c"><span>节: 1/1</span><span>设置值: 2.5厘米</span></span><i class="sep"></i><span class="c" style="gap:13px;padding-right:10px"><span>行: 1</span><span>列: 1</span></span><i class="sep"></i><span class="c">字数: 893/893</span><i class="sep"></i><button style="gap:5px;margin-left:13px">${i('shield')}未认证</button><div class="fill"></div>
<div class="v row">${[['full','全屏'],['book','阅读'],['pageview','页面视图'],['outline','大纲'],['globe','Web版式'],['eye','护眼']].map(([n,l],k)=>`<button class="${k==2?'on':''}" aria-label="${l}">${i(n)}</button>`).join('')}</div><i class="sep" style="margin:0 11px 0 7px"></i><button style="gap:6px;color:#333;margin-right:11px">72%${i('caret')}</button><button aria-label="缩小">${i('minus')}</button><input type="range" aria-label="缩放" min="0" max="100" value="32"><button aria-label="放大">${i('plusd')}</button><button style="margin:0 16px 0 14px" aria-label="适合">${i('fit')}</button>`);

def('speed-ball',`:host{position:absolute;right:17px;bottom:127px;width:120px;height:62px;z-index:6;color:#fff}
.pill{position:absolute;right:0;top:10px;width:76px;height:42px;background:#2f333e;border-radius:0 21px 21px 0;box-shadow:0 0 6px #0004;display:grid;grid-template-rows:21px 21px;padding-left:18px}
.l{display:grid;grid-template-columns:8px 24px 20px;align-items:center;line-height:20px;font-size:11px;text-align:right;column-gap:1px}.l b{font-weight:600}.l+.l{border-top:1px solid #23262f}.l small{font-size:10px;color:#a9abb2;text-align:left}
.ball{position:absolute;left:1px;top:1px;filter:drop-shadow(0 0 4px #0006)}.n{position:absolute;left:14px;top:16px;font:300 24px/28px "Open Sans","Noto Sans",sans-serif}.n small{font-size:10px;font-weight:400}`,
()=>`<div class="pill"><div class="l"><svg width="8" height="8" viewBox="0 0 8 8" fill="none" stroke="#3fb0ee" stroke-width="1.500"><path d="M4 7v-6M1 4l3-3 3 3"/></svg><b>0</b><small>K/s</small></div><div class="l"><svg width="8" height="8" viewBox="0 0 8 8" fill="none" stroke="#35b34a" stroke-width="1.500"><path d="M4 1v6M1 4l3 3 3-3"/></svg><b>0.2</b><small>K/s</small></div></div>
<svg class="ball" width="60" height="60" viewBox="0 0 60 60" fill="none"><defs><linearGradient id="s" x1="0" y1="0" x2="0" y2="1"><stop offset="0" stop-color="#3fe0e0"/><stop offset=".5" stop-color="#7be08a"/><stop offset="1" stop-color="#e8d840"/></linearGradient><linearGradient id="w" x1="0" y1="0" x2="0" y2="1"><stop offset="0" stop-color="#f07060"/><stop offset="1" stop-color="#e8d840"/></linearGradient></defs><circle cx="30" cy="30" r="29" fill="#555a68" stroke="#3a3d48" stroke-width="2"/><path d="M30 5a25 25 0 0 1 0 50.500" stroke="url(#s)" stroke-width="1.500"/><path d="M30 55.500a25 25 0 0 1-23-36" stroke="url(#w)" stroke-width="1.500"/></svg><div class="n">82<small>%</small></div>`);
def('site-mark',`:host{position:absolute;right:8px;bottom:2px;width:152px;height:50px;z-index:6;pointer-events:none;opacity:.8}
svg{position:absolute;left:-1px;top:0}.a{position:absolute;left:43px;top:-2px;font:700 21px/26px "Noto Sans CJK SC",sans-serif;color:#4a8acb;white-space:nowrap}.b{position:absolute;left:45px;top:25px;font:700 16px/20px "Liberation Sans",sans-serif;color:#52c077}`,
()=>`<svg width="46" height="46" viewBox="0 0 46 46"><defs><linearGradient id="g" x1="0" y1="1" x2="1" y2="0"><stop offset="0" stop-color="#f0e050"/><stop offset=".4" stop-color="#4fb85a"/><stop offset="1" stop-color="#3fa860"/></linearGradient><linearGradient id="h" x1="0" y1="1" x2="1" y2="0"><stop offset="0" stop-color="#2f6fc0"/><stop offset="1" stop-color="#49c0ee"/></linearGradient></defs><path d="M44 3c-24-3-43 10-42 25 0 5 3 8 7 10-3-12 10-28 35-35z" fill="url(#h)"/><path d="M24 18c-10 0-16 8-13 14 3 4 10 2 13-3-6 2-8-1-6-4s7-5 11-2z" fill="#3f80c8"/><path d="M22 18c8-4 20-3 20 5 0 10-15 18-35 19 14-3 25-9 26-16 0-5-5-8-11-8z" fill="url(#g)"/></svg><div class="a">极光下载站</div><div class="b">www.xz7.com</div>`);
def('pointer-arrows',`:host{position:absolute;left:0;top:0;z-index:7;pointer-events:none}svg{filter:drop-shadow(3px 3px 2px #0007)}`,
()=>`<svg width="620" height="510" viewBox="0 0 620 510" fill="#f00" stroke="#f00" stroke-linecap="round" stroke-width="3">${[[331,131,374,65],[535,203,603,175],[483,495,594,411]].map(([x,y,X,Y])=>{const L=Math.hypot(X-x,Y-y),u=(X-x)/L,v=(Y-y)/L,p=(d,s)=>`${(X-u*d-v*s).toFixed(1)} ${(Y-v*d+u*s).toFixed(1)}`;return`<path d="M${x} ${y}L${p(16,0)}"/><path stroke="none" d="M${X} ${Y}L${p(23,9)} ${p(17,0)} ${p(23,-9)}z"/>`}).join('')}</svg>`);

def('wps-app',`:host{display:flex;flex-direction:column;height:100vh;position:relative;overflow:hidden}
main{flex:1;display:flex;min-height:0}.ws{flex:1;min-width:0;display:flex;flex-direction:column;background:#e1e1e1}.cv{flex:1;min-height:0;display:flex;justify-content:center;align-items:flex-start;padding-top:14px;overflow:hidden}`,
()=>`<title-bar></title-bar><menu-bar></menu-bar><ribbon-bar></ribbon-bar><main><v-ruler></v-ruler><div class="ws"><h-ruler></h-ruler><div class="cv"><doc-page></doc-page></div></div><v-scroll></v-scroll><style-panel></style-panel><side-bar></side-bar></main><status-bar></status-bar><speed-ball></speed-ball><site-mark></site-mark><pointer-arrows></pointer-arrows>`);
</script>
</body>
</html>
